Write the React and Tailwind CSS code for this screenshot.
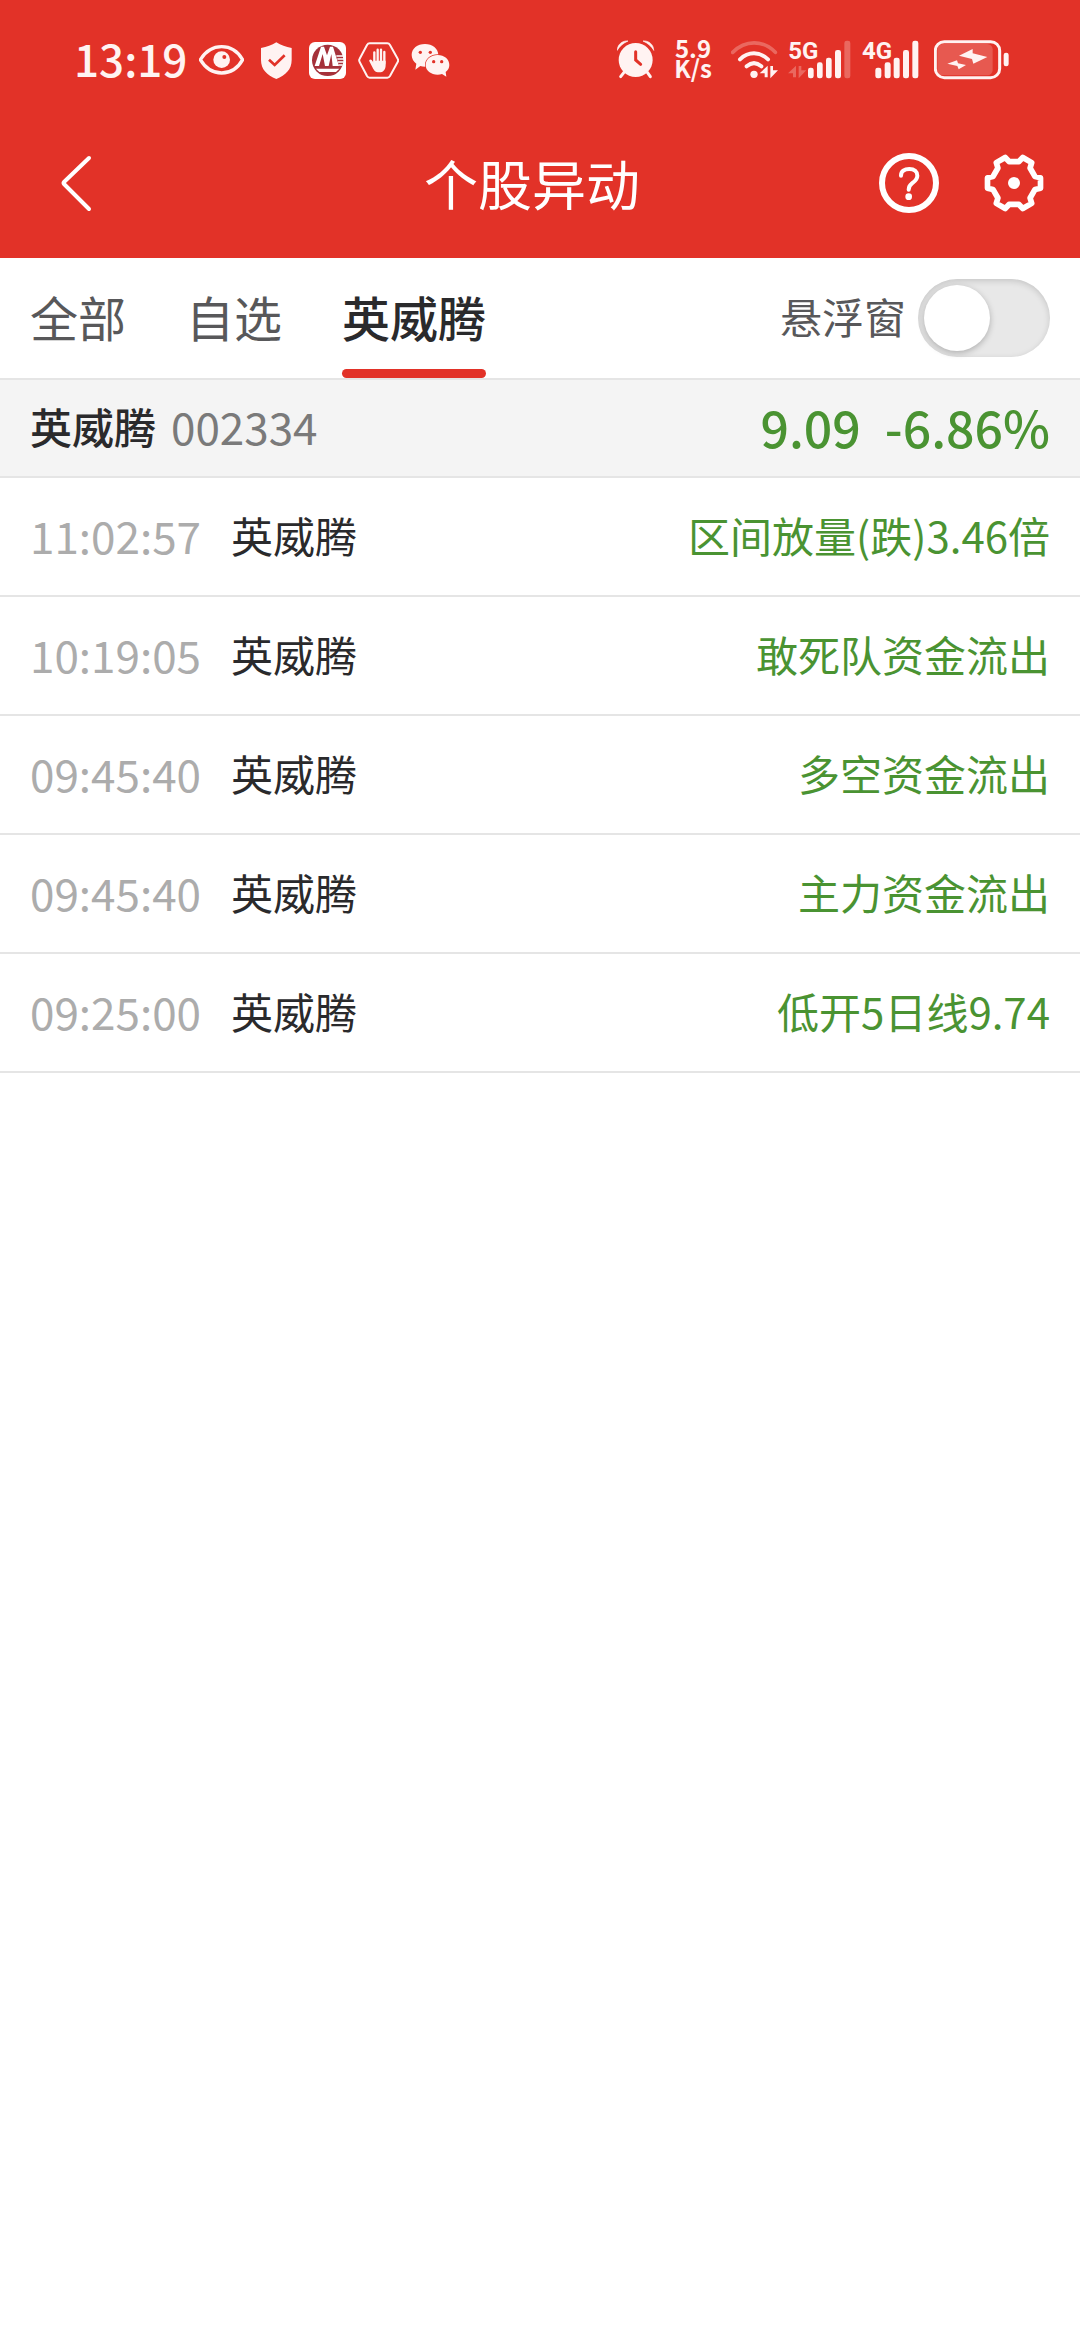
import { useState } from "react";

const TABS = ["全部", "自选", "英威腾"];

const STOCK = { name: "英威腾", code: "002334", price: "9.09", change: "-6.86%" };

const EVENTS = [
  { id: 1, time: "11:02:57", name: "英威腾", text: "区间放量(跌)3.46倍" },
  { id: 2, time: "10:19:05", name: "英威腾", text: "敢死队资金流出" },
  { id: 3, time: "09:45:40", name: "英威腾", text: "多空资金流出" },
  { id: 4, time: "09:45:40", name: "英威腾", text: "主力资金流出" },
  { id: 5, time: "09:25:00", name: "英威腾", text: "低开5日线9.74" },
];

// Outline of the six-tooth gear
const gearPoints = [0, 60, 120, 180, 240, 300]
  .flatMap((deg) => [
    [deg - 17, 66],
    [deg - 11, 81],
    [deg + 11, 81],
    [deg + 17, 66],
  ])
  .map(([deg, r]) => {
    const a = (deg * Math.PI) / 180;
    return `${90 + r * Math.cos(a)},${90 + r * Math.sin(a)}`;
  })
  .join(" ");

function EyeIcon() {
  return (
    <svg className="h-10 w-[45px]" viewBox="417 60 135 120" fill="none">
      <path
        d="M421 119C436 95 458 80 485 80s49 15 63 39c-14 25-36 40-63 40s-49-15-64-40Z"
        stroke="currentColor"
        strokeWidth="10"
      />
      <circle cx="485" cy="119" r="25" fill="currentColor" />
      <circle cx="493" cy="111" r="6" fill="#e23228" />
    </svg>
  );
}

function ShieldIcon() {
  return (
    <svg className="h-10 w-[41px]" viewBox="588 60 123 120" fill="none">
      <path
        d="M649 67c14 9 28 14 46 17v36c0 28-18 46-46 57-28-11-46-29-46-57V84c18-3 32-8 46-17Z"
        fill="currentColor"
      />
      <path d="m627 119 17 16 30-29" stroke="#e23228" strokeWidth="8" />
    </svg>
  );
}

function BankIcon() {
  return (
    <svg className="h-10 w-[37px]" viewBox="747 60 111 120" fill="none">
      <rect x="747" y="66" width="111" height="111" rx="18" fill="#fff" />
      <circle cx="803" cy="121" r="47" fill="#a5313a" />
      <path d="m764 138 19-58h9l9 26 9-26h9l18 58Z" fill="#fff" />
      <path d="m777 138 11-36 7 36ZM806 138l8-36 4 36Z" fill="#a5313a" />
      <path d="M829 108h21M832 117h20M834 126h17M836 135h12" stroke="#fff" strokeWidth="4" />
      <path d="M768 146h70l-10 10h-50Z" fill="#fff" />
    </svg>
  );
}

function HandIcon() {
  return (
    <svg className="h-10 w-[41px]" viewBox="894 60 123 120" fill="none" stroke="currentColor">
      <path
        d="M929 70h53q5 0 8 5l23 41q3 5 0 10l-23 42q-3 5-8 5h-53q-5 0-8-5l-22-42q-3-5 0-10l22-41q3-5 8-5Z"
        strokeWidth="6"
      />
      <path d="M943 130V97M953 125V89M963 125V89M973 130V96" strokeWidth="7" strokeLinecap="round" />
      <path
        d="M940 122h37v12c0 14-6 23-20 23-11 0-15-6-19-14l-10-19c-2-5 4-8 7-4l7 10Z"
        fill="currentColor"
        stroke="none"
      />
    </svg>
  );
}

function WechatIcon() {
  return (
    <svg className="h-10 w-[39px]" viewBox="1050 60 117 120" fill="currentColor">
      <path d="M1092 72c-23 0-40 14-40 33 0 11 6 20 14 26l-3 18 15-11c4 1 9 2 14 2 23 0 40-16 40-35s-18-33-40-33Z" />
      <circle cx="1078" cy="97" r="5" fill="#e23228" />
      <circle cx="1108" cy="97" r="5" fill="#e23228" />
      <path
        d="M1130 105c-20 0-36 13-36 30s16 29 36 29c5 0 9-1 13-2l13 8-2-14c7-5 11-12 11-21 0-17-15-30-35-30Z"
        stroke="#e23228"
        strokeWidth="4"
        paintOrder="stroke"
      />
      <circle cx="1118" cy="125" r="5" fill="#e23228" />
      <circle cx="1142" cy="125" r="5" fill="#e23228" />
    </svg>
  );
}

function AlarmIcon() {
  return (
    <svg className="h-10 w-[38px]" viewBox="51 60 114 120" fill="none" strokeLinecap="round">
      <circle cx="107" cy="120" r="51" fill="currentColor" />
      <path d="m72 157-10 13M142 157l9 13" stroke="currentColor" strokeWidth="9" />
      <path
        d="M52 90c0-16 15-29 32-27-14 6-24 15-32 27ZM161 90c0-16-15-29-32-27 14 6 24 15 32 27Z"
        fill="currentColor"
        stroke="currentColor"
        strokeWidth="2"
      />
      <path d="M107 95v25l15 13" stroke="#e23228" strokeWidth="9" />
    </svg>
  );
}

function WifiIcon() {
  return (
    <svg className="h-10 w-[49px]" viewBox="393 60 147 120" fill="none" stroke="currentColor" strokeLinecap="round">
      <path d="M398 97c38-38 91-38 128 0" strokeWidth="11" opacity="0.28" />
      <path d="M420 118c25-24 59-24 84 0" strokeWidth="12" />
      <path d="M440 139c14-12 30-12 44 0" strokeWidth="12" />
      <circle cx="462" cy="163" r="11" fill="currentColor" stroke="none" />
      <path d="M503 137v35h-9v-12h-15ZM511 175v-37h8v13h15Z" fill="currentColor" stroke="none" />
    </svg>
  );
}

function Signal5G() {
  return (
    <svg className="h-12 w-[66px]" viewBox="564 48 198 144" fill="currentColor">
      <text x="565" y="117" className="font-['Roboto'] text-[72px] font-bold">
        5G
      </text>
      <path d="M588 137v35h-9v-12h-15ZM596 175v-37h8v13h15Z" opacity="0.28" />
      <rect x="624" y="143" width="17" height="32" rx="7" />
      <rect x="651" y="127" width="17" height="48" rx="7" />
      <rect x="678" y="113" width="17" height="62" rx="7" />
      <rect x="705" y="90" width="18" height="85" rx="7" />
      <rect x="733" y="62" width="18" height="113" rx="7" opacity="0.28" />
    </svg>
  );
}

function Signal4G() {
  return (
    <svg className="h-12 w-[64px]" viewBox="786 48 192 144" fill="currentColor">
      <text x="786" y="117" className="font-['Roboto'] text-[72px] font-bold">
        4G
      </text>
      <rect x="826" y="143" width="18" height="32" rx="7" />
      <rect x="854" y="127" width="18" height="48" rx="7" />
      <rect x="881" y="113" width="18" height="62" rx="7" />
      <rect x="909" y="90" width="18" height="85" rx="7" />
      <rect x="937" y="62" width="18" height="113" rx="7" />
    </svg>
  );
}

function BatteryIcon() {
  return (
    <svg className="h-10 w-[75px]" viewBox="1002 60 225 120" fill="currentColor">
      <rect x="1012" y="72" width="166" height="94" rx="16" opacity="0.2" />
      <rect x="1006" y="65" width="193" height="108" rx="27" fill="none" stroke="currentColor" strokeWidth="9" />
      <rect x="1211" y="98" width="15" height="41" rx="7" />
      <path d="m1077 107 41-20v13l44 11-42 20-4-14ZM1042 131l29-10 3 9 24 5-22 13-4-10Z" />
    </svg>
  );
}

function StatusBar() {
  return (
    <div className="flex h-[120px] items-center justify-between pr-[71px] pl-[74px] text-[#fff3f2]">
      <div className="flex items-center gap-3">
        <span className="pb-1 text-[44px] leading-none font-medium">13:19</span>
        <EyeIcon />
        <ShieldIcon />
        <BankIcon />
        <HandIcon />
        <WechatIcon />
      </div>
      <div className="flex items-center gap-2">
        <AlarmIcon />
        <p className="w-[60px] pb-1 text-center text-[24px] leading-5 font-bold whitespace-pre-line">{"5.9\nK/s"}</p>
        <WifiIcon />
        <Signal5G />
        <Signal4G />
        <BatteryIcon />
      </div>
    </div>
  );
}

function NavBar() {
  return (
    <div className="grid h-[126px] grid-cols-[1fr_auto_1fr] items-center pr-9 pl-5 text-white">
      <button type="button" aria-label="返回" className="justify-self-start px-10">
        <svg className="h-[60px] w-8" viewBox="0 0 32 60" fill="none">
          <path
            d="M29 5 4 29q-1 1 0 2l25 25"
            stroke="currentColor"
            strokeWidth="4"
            strokeLinecap="round"
            strokeLinejoin="round"
          />
        </svg>
      </button>
      <h1 className="text-[54px] leading-[60px]">个股异动</h1>
      <div className="flex gap-[45px] justify-self-end">
        <button type="button" aria-label="帮助">
          <svg className="size-[60px]" viewBox="117 68 180 180" fill="none" stroke="currentColor">
            <circle cx="207" cy="158" r="81" strokeWidth="18" />
            <path
              d="M183 136c0-13 10-20 25-20s24 8 24 20c0 12-8 17-16 23-8 6-10 11-10 19"
              strokeWidth="12"
              strokeLinecap="round"
            />
            <circle cx="206" cy="199" r="10" fill="currentColor" stroke="none" />
          </svg>
        </button>
        <button type="button" aria-label="设置">
          <svg className="size-[60px]" viewBox="0 0 180 180" fill="none">
            <polygon points={gearPoints} stroke="currentColor" strokeWidth="17" strokeLinejoin="round" />
            <circle cx="90" cy="90" r="18" fill="currentColor" />
          </svg>
        </button>
      </div>
    </div>
  );
}

function App() {
  const [activeTab, setActiveTab] = useState("英威腾");
  const [floating, setFloating] = useState(false);

  return (
    <div className="min-h-screen bg-white font-['Noto_Sans_CJK_SC',sans-serif]">
      <header className="bg-[#e23228] pb-3">
        <StatusBar />
        <NavBar />
      </header>

      <div className="flex h-[122px] items-stretch justify-between border-b-2 border-[#e5e5e5] px-[30px]">
        <nav className="flex gap-[60px]">
          {TABS.map((tab) => (
            <button
              key={tab}
              type="button"
              onClick={() => setActiveTab(tab)}
              className={`pt-1 text-[48px] leading-none ${
                tab === activeTab ? "font-medium text-[#2a2a2c]" : "text-[#58585a]"
              }`}
            >
              <span className="flex h-full flex-col">
                <span className="flex flex-1 items-center">{tab}</span>
                <span className={`h-[9px] rounded-full ${tab === activeTab ? "bg-[#e23228]" : "bg-transparent"}`} />
              </span>
            </button>
          ))}
        </nav>
        <label className="flex items-center gap-3 text-[42px] leading-none text-[#58585a]">
          <span className="pb-1">悬浮窗</span>
          <input
            type="checkbox"
            role="switch"
            checked={floating}
            onChange={(e) => setFloating(e.target.checked)}
            className="flex h-[78px] w-[132px] appearance-none items-center rounded-full bg-[#e8e8e8] p-[6px] shadow-[inset_0_2px_6px_rgba(0,0,0,0.15)] before:size-[66px] before:rounded-full before:bg-white before:shadow-[0_2px_6px_rgba(0,0,0,0.25)] before:content-[''] checked:justify-end checked:bg-[#e23228]"
          />
        </label>
      </div>

      <div className="flex h-[98px] items-center justify-between border-b-2 border-[#e5e5e5] bg-[#f4f4f4] px-[30px] pb-1">
        <div className="flex items-center gap-[15px]">
          <span className="text-[42px] leading-none font-medium text-[#2a2a2c]">{STOCK.name}</span>
          <span className="text-[44px] leading-none text-[#7a7a7a]">{STOCK.code}</span>
        </div>
        <div className="flex gap-6 text-[50px] leading-none font-medium text-[#4a9332]">
          <span>{STOCK.price}</span>
          <span>{STOCK.change}</span>
        </div>
      </div>

      <ul>
        {EVENTS.map((event) => (
          <li key={event.id} className="flex h-[119px] items-center border-b-2 border-[#e5e5e5] px-[30px] pb-1">
            <span className="text-[44px] leading-none text-[#acacac]">{event.time}</span>
            <span className="ml-[30px] text-[42px] leading-none text-[#2a2a2c]">{event.name}</span>
            <span className="ml-auto text-[42px] leading-none text-[#4a9332]">{event.text}</span>
          </li>
        ))}
      </ul>
    </div>
  );
}

export default App;
